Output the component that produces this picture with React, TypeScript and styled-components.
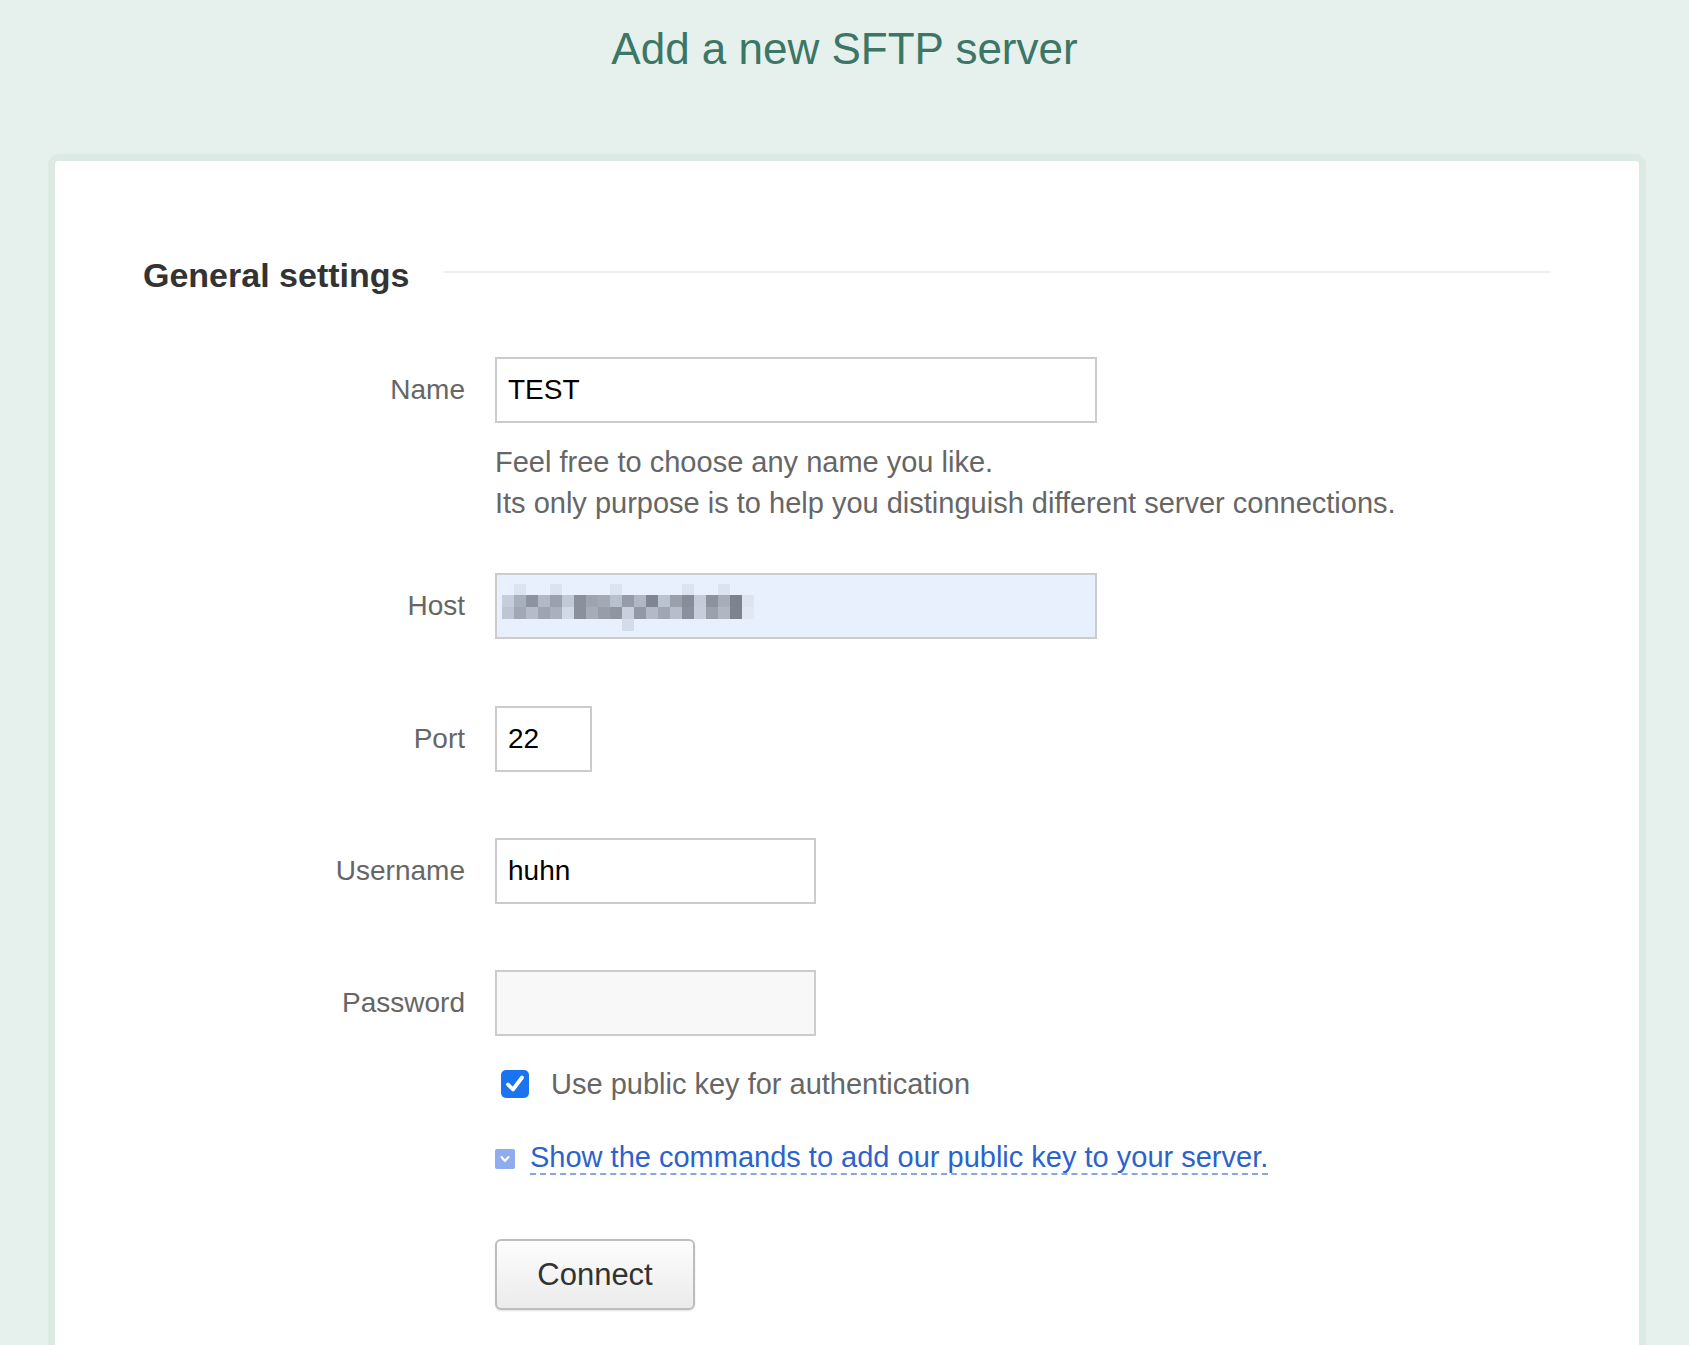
import styled, { createGlobalStyle } from "styled-components";

const GlobalStyle = createGlobalStyle`
  html, body {
    margin: 0;
    padding: 0;
    background: #e6f0ec;
    font-family: "Liberation Sans", Arial, Helvetica, sans-serif;
  }
`;

const Page = styled.div`
  min-height: 1345px;
  padding-top: 23px;
  box-sizing: border-box;
  overflow: hidden;
`;

const Title = styled.h1`
  margin: 0 0 79px;
  text-align: center;
  font-size: 44px;
  line-height: 52px;
  font-weight: normal;
  color: #3b7666;
`;

const Card = styled.div`
  margin: 0 43px 0 48px;
  background: #fff;
  border: 7px solid #dbebe4;
  border-radius: 11px;
  padding: 94px 88px 120px;
  min-height: 1100px;
`;

const SectionHeader = styled.div`
  display: flex;
  align-items: center;
  gap: 35px;
  margin-bottom: 62px;

  h2 {
    margin: 0;
    font-size: 34px;
    line-height: 40px;
    font-weight: bold;
    color: #333;
    white-space: nowrap;
  }

  hr {
    flex: 1;
    border: 0;
    border-top: 2px solid #eeeeee;
    margin: 0;
    position: relative;
    top: -3px;
  }
`;

const Row = styled.div<{ $before?: number; $after?: number }>`
  display: grid;
  grid-template-columns: 322px 1fr;
  column-gap: 30px;
  align-items: center;
  margin-top: ${(p) => p.$before ?? 0}px;
  margin-bottom: ${(p) => p.$after ?? 0}px;
`;

const Label = styled.label`
  text-align: right;
  font-size: 28px;
  color: #666;
`;

const Input = styled.input<{ $w: number; $bg?: string }>`
  box-sizing: border-box;
  width: ${(p) => p.$w}px;
  height: 66px;
  border: 2px solid #cccccc;
  background: ${(p) => p.$bg ?? "#fff"};
  padding: 0 11px;
  font-family: "Liberation Sans", Arial, sans-serif;
  font-size: 28px;
  color: #000;
  outline: none;
  border-radius: 0;
`;

const FakeInput = styled.div<{ $w: number; $bg?: string }>`
  box-sizing: border-box;
  width: ${(p) => p.$w}px;
  height: 66px;
  border: 2px solid #cccccc;
  background: ${(p) => p.$bg ?? "#fff"};
  display: flex;
  align-items: flex-start;
  padding: 9px 0 0 5px;
`;

const Help = styled.div`
  grid-column: 2;
  margin-top: 19px;
  font-size: 29px;
  line-height: 41px;
  color: #666;
`;

const CheckRow = styled.div<{ $after?: number }>`
  margin-left: 352px;
  display: flex;
  align-items: center;
  gap: 22px;
  padding-left: 6px;
  height: 40px;
  margin-bottom: ${(p) => p.$after ?? 0}px;
  font-size: 29px;
  color: #666;
`;

const Box = styled.span`
  width: 28px;
  height: 28px;
  border-radius: 5px;
  background: #1a74f2;
  display: flex;
  align-items: center;
  justify-content: center;
`;

const LinkRow = styled.div<{ $after?: number }>`
  margin-left: 352px;
  display: flex;
  align-items: center;
  gap: 15px;
  margin-bottom: ${(p) => p.$after ?? 0}px;
`;

const ToggleIcon = styled.span`
  width: 20px;
  height: 20px;
  border-radius: 2px;
  background: #8eacee;
  display: flex;
  align-items: center;
  justify-content: center;
  margin-top: 2px;
`;

const DashedLink = styled.a`
  font-size: 29px;
  line-height: 32px;
  color: #2c62cc;
  text-decoration: none;
  border-bottom: 2px dashed #86a6ec;
  cursor: pointer;
`;

const Actions = styled.div`
  margin-left: 352px;
`;

const Button = styled.button`
  width: 200px;
  height: 71px;
  border: 2px solid #bdbdbd;
  border-radius: 6px;
  background: linear-gradient(#fdfdfd, #ebebeb);
  box-shadow: 0 1px 2px rgba(0, 0, 0, 0.12);
  font-family: "Liberation Sans", Arial, sans-serif;
  font-size: 31px;
  color: #333;
  cursor: pointer;
`;

const row1 = [
  "#c6cddb", "#a9b0bd", "#8d939f", "#b2b9c6", "#9aa1ad", "#c2c9d6", "#8b919c",
  "#9ea4b0", "#a3a9b5", "#b9c0cd", "#959ba7", "#b1b7c4", "#7f8591", "#bcc3d0",
  "#9aa0ac", "#878d99", "#c5ccd9", "#8c929e", "#a7adb9", "#7c828e", "#dde4f0",
];
const row2 = [
  "#bfc6d3", "#a1a8b4", "#b5bcc9", "#9ea5b1", "#aab1be", "#d2d9e6", "#8a909c",
  "#a6adb9", "#979da9", "#8f95a1", "#c9d0dd", "#9298a4", "#b3bac7", "#a0a6b2",
  "#b7bdca", "#8a909c", "#c6cddb", "#9aa0ac", "#b0b7c3", "#7d838f", "#e2e8f3",
];

const Mosaic = () => (
  <svg width="260" height="52" viewBox="0 0 260 52">
    {[1, 4, 9, 15, 18].map((c) => (
      <rect key={"t" + c} x={c * 12} y={0} width={12} height={11} fill="#dbe3f1" />
    ))}
    {row1.map((f, i) => (
      <rect key={"a" + i} x={i * 12} y={11} width={12} height={12} fill={f} />
    ))}
    {row2.map((f, i) => (
      <rect key={"b" + i} x={i * 12} y={23} width={12} height={12} fill={f} />
    ))}
    <rect x={120} y={35} width={12} height={12} fill="#d4dcea" />
  </svg>
);

export default function App() {
  return (
    <Page>
      <GlobalStyle />
      <Title>Add a new SFTP server</Title>
      <Card>
        <SectionHeader>
          <h2>General settings</h2>
          <hr />
        </SectionHeader>

        <Row>
          <Label>Name</Label>
          <Input $w={602} defaultValue="TEST" />
          <Help>
            Feel free to choose any name you like.
            <br />
            Its only purpose is to help you distinguish different server connections.
          </Help>
        </Row>

        <Row $before={49} $after={67}>
          <Label>Host</Label>
          <FakeInput $w={602} $bg="#e8f0fe">
            <Mosaic />
          </FakeInput>
        </Row>

        <Row $after={66}>
          <Label>Port</Label>
          <Input $w={97} defaultValue="22" />
        </Row>

        <Row $after={66}>
          <Label>Username</Label>
          <Input $w={321} defaultValue="huhn" />
        </Row>

        <Row $after={28}>
          <Label>Password</Label>
          <Input $w={321} $bg="#f8f8f8" type="password" />
        </Row>

        <CheckRow $after={37}>
          <Box>
            <svg width="22" height="22" viewBox="0 0 22 22">
              <path
                d="M4 11.5 L9 16.5 L18 4.5"
                fill="none"
                stroke="#fff"
                strokeWidth="3.8"
                strokeLinecap="round"
                strokeLinejoin="round"
              />
            </svg>
          </Box>
          Use public key for authentication
        </CheckRow>

        <LinkRow $after={64}>
          <ToggleIcon>
            <svg width="12" height="12" viewBox="0 0 12 12">
              <path
                d="M2.5 4 L6 8 L9.5 4"
                fill="none"
                stroke="#fff"
                strokeWidth="2"
                strokeLinecap="round"
                strokeLinejoin="round"
              />
            </svg>
          </ToggleIcon>
          <DashedLink>Show the commands to add our public key to your server.</DashedLink>
        </LinkRow>

        <Actions>
          <Button>Connect</Button>
        </Actions>
      </Card>
    </Page>
  );
}
